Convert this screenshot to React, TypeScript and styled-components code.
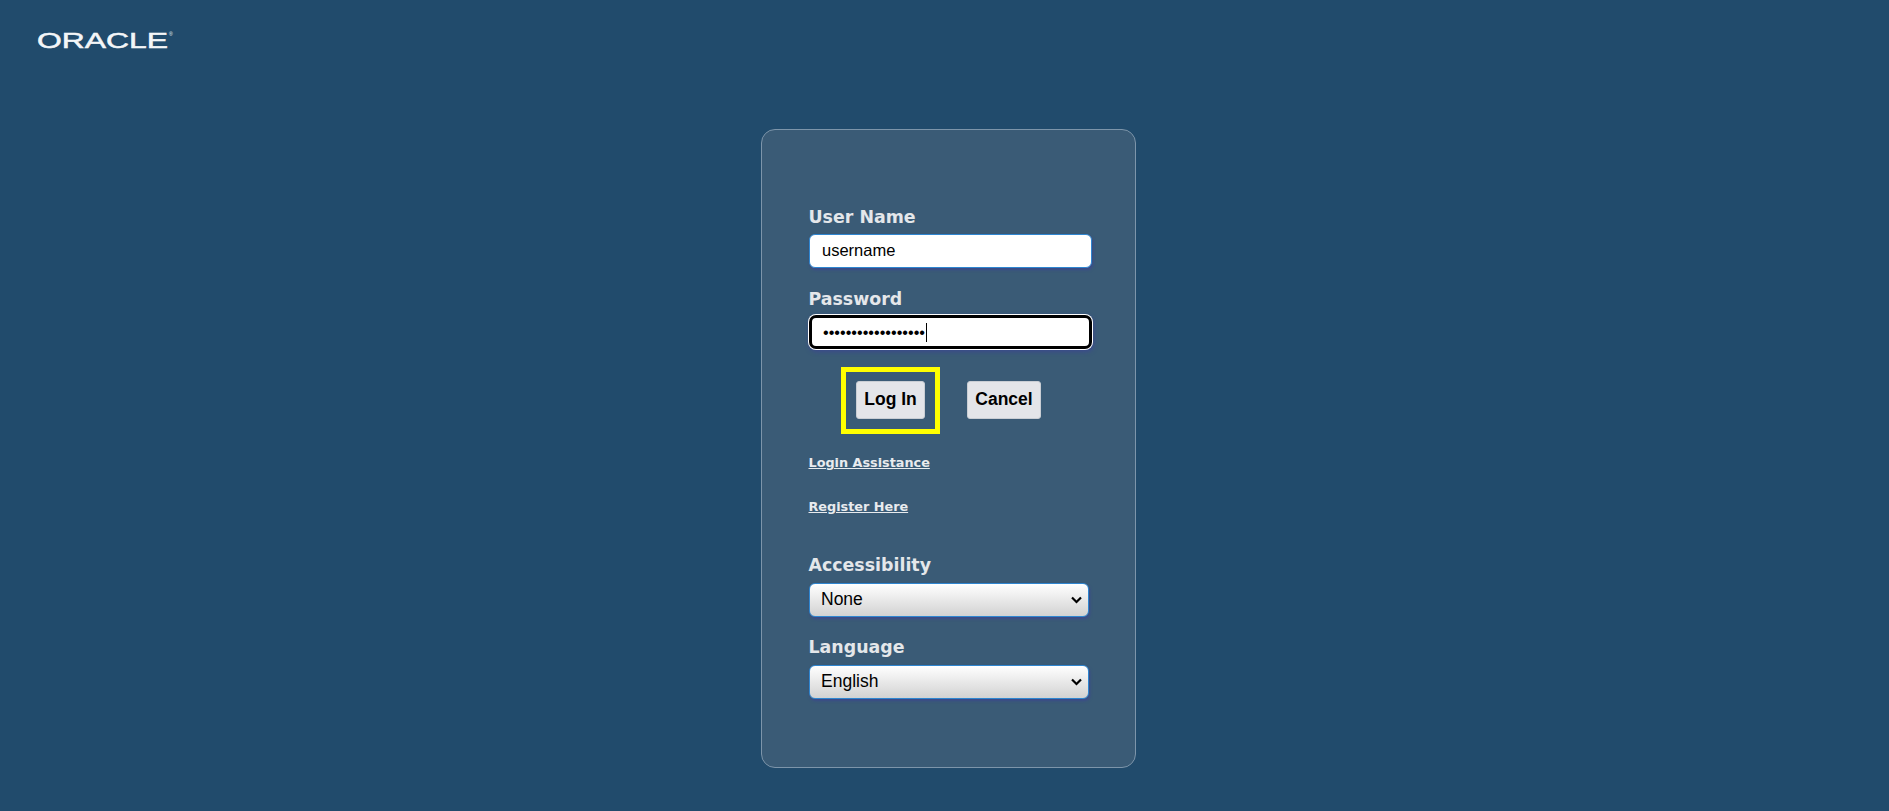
import React from 'react'
import styled, { createGlobalStyle } from 'styled-components'

const GlobalStyle = createGlobalStyle`
  html, body {
    margin: 0;
    padding: 0;
    height: 100%;
    background: #214b6c;
  }
`

const Page = styled.div`
  box-sizing: border-box;
  width: 100%;
  height: 811px;
  overflow: hidden;
  padding: 25px 0 0 8px;
  background: #214b6c;
  font-family: 'Liberation Sans', Arial, sans-serif;
`

const Logo = styled.svg`
  display: block;
  width: 150px;
  height: 30px;
  margin-left: 29px;
  fill: #f4f6f8;
`

const LogoWord = styled.text`
  stroke: #f4f6f8;
  stroke-width: 0.5px;
`

const Panel = styled.form`
  box-sizing: border-box;
  width: 375px;
  height: 639px;
  margin: 74px auto 0;
  padding: 77px 0 0 46px;
  background: #3a5b76;
  border: 1px solid #7d95aa;
  border-radius: 14px;
`

const Field = styled.div`
  display: flex;
  flex-direction: column;
  align-items: flex-start;
  margin-bottom: 21px;
`

const SelectField = styled(Field)`
  margin-bottom: 20px;
`

const Label = styled.label<{ $gap?: number }>`
  height: 20px;
  margin: 0 0 ${({ $gap }) => $gap ?? 7}px 0.5px;
  color: #e4e7ea;
  font-family: 'DejaVu Sans', Verdana, sans-serif;
  font-size: 17.4px;
  font-weight: 700;
  line-height: 20px;
`

const InputWrap = styled.div`
  position: relative;
  margin-left: 1px;
`

const Input = styled.input`
  display: block;
  box-sizing: border-box;
  width: 283px;
  height: 34px;
  padding: 0 12px 2px;
  color: #000;
  background: #fff;
  border: 1px solid #2f86d0;
  border-radius: 6px;
  box-shadow: 1px 2px 3px #3b4a8c;
  font-family: 'Liberation Sans', Arial, sans-serif;
  font-size: 16.5px;
  outline: none;
`

const FocusedInput = styled(Input)`
  margin-top: -1px;
  padding: 0 11px;
  border: 3px solid #000;
  border-radius: 7px;
  box-shadow: 0 0 0 1px #fff, 1px 2px 4px 1px #3b4a8c;
  font-size: 16.2px;
`

const Caret = styled.span`
  position: absolute;
  top: 7px;
  left: 117px;
  width: 1px;
  height: 19px;
  background: #000;
`

const Actions = styled.div`
  display: flex;
  align-items: center;
  margin: -3px 0 0 33px;
`

const Highlight = styled.div`
  box-sizing: border-box;
  display: flex;
  align-items: center;
  justify-content: center;
  width: 99px;
  height: 67px;
  margin-right: 27px;
  border: 5px solid #ffff00;
`

const Button = styled.button<{ $width: number }>`
  box-sizing: border-box;
  width: ${({ $width }) => $width}px;
  height: 38px;
  margin-bottom: 1px;
  padding: 0 0 2px;
  color: #000;
  background: #e3e5e9;
  border: 1px solid #c9ced4;
  border-radius: 3px;
  font-family: 'Liberation Sans', Arial, sans-serif;
  font-size: 17.5px;
  font-weight: 700;
`

const Links = styled.div`
  display: flex;
  flex-direction: column;
  align-items: flex-start;
  gap: 27px;
  margin: 20px 0 40px 0.5px;
`

const HelpLink = styled.a`
  color: #e8ebee;
  font-family: 'DejaVu Sans', Verdana, sans-serif;
  font-size: 12.8px;
  font-weight: 700;
  line-height: 17px;
  text-decoration: underline;
`

const SelectWrap = styled.div`
  position: relative;
  margin-left: 1px;
`

const Select = styled.select`
  display: block;
  box-sizing: border-box;
  width: 280px;
  height: 34px;
  padding: 0 30px 2px 11px;
  color: #000;
  background: linear-gradient(#ffffff, #d2d2d2);
  border: 1px solid #2f86d0;
  border-radius: 6px;
  box-shadow: 1px 2px 3px #3b4a8c;
  font-family: 'Liberation Sans', Arial, sans-serif;
  font-size: 17.5px;
  outline: none;
  appearance: none;
`

const Chevron = styled.svg`
  position: absolute;
  top: 13px;
  right: 7px;
  width: 11px;
  height: 8px;
  fill: none;
  stroke: #000;
  stroke-width: 2.2px;
  pointer-events: none;
`

const SelectBox: React.FC<{ id: string; value: string }> = ({ id, value }) => (
  <SelectWrap>
    <Select id={id} defaultValue={value}>
      <option>{value}</option>
    </Select>
    <Chevron viewBox="0 0 11 8">
      <path d="M1 1.5 L5.5 6 L10 1.5" />
    </Chevron>
  </SelectWrap>
)

const App: React.FC = () => {
  return (
    <Page>
      <GlobalStyle />
      <Logo viewBox="0 0 150 30" role="img" aria-label="Oracle">
        <LogoWord
          x="0"
          y="23"
          fontFamily="Liberation Sans, Arial, sans-serif"
          fontSize="22.5"
          textLength="131"
          lengthAdjust="spacingAndGlyphs"
        >
          ORACLE
        </LogoWord>
        <text x="132" y="11" fontFamily="Liberation Sans, Arial, sans-serif" fontSize="5">
          ®
        </text>
      </Logo>
      <Panel>
        <Field>
          <Label htmlFor="username">User Name</Label>
          <InputWrap>
            <Input id="username" defaultValue="username" />
          </InputWrap>
        </Field>
        <Field>
          <Label htmlFor="password">Password</Label>
          <InputWrap>
            <FocusedInput id="password" type="password" defaultValue=".................." />
            <Caret />
          </InputWrap>
        </Field>
        <Actions>
          <Highlight>
            <Button type="button" $width={69}>Log In</Button>
          </Highlight>
          <Button type="button" $width={74}>Cancel</Button>
        </Actions>
        <Links>
          <HelpLink href="#">Login Assistance</HelpLink>
          <HelpLink href="#">Register Here</HelpLink>
        </Links>
        <SelectField>
          <Label htmlFor="accessibility" $gap={8}>Accessibility</Label>
          <SelectBox id="accessibility" value="None" />
        </SelectField>
        <SelectField>
          <Label htmlFor="language" $gap={8}>Language</Label>
          <SelectBox id="language" value="English" />
        </SelectField>
      </Panel>
    </Page>
  )
}

export default App
